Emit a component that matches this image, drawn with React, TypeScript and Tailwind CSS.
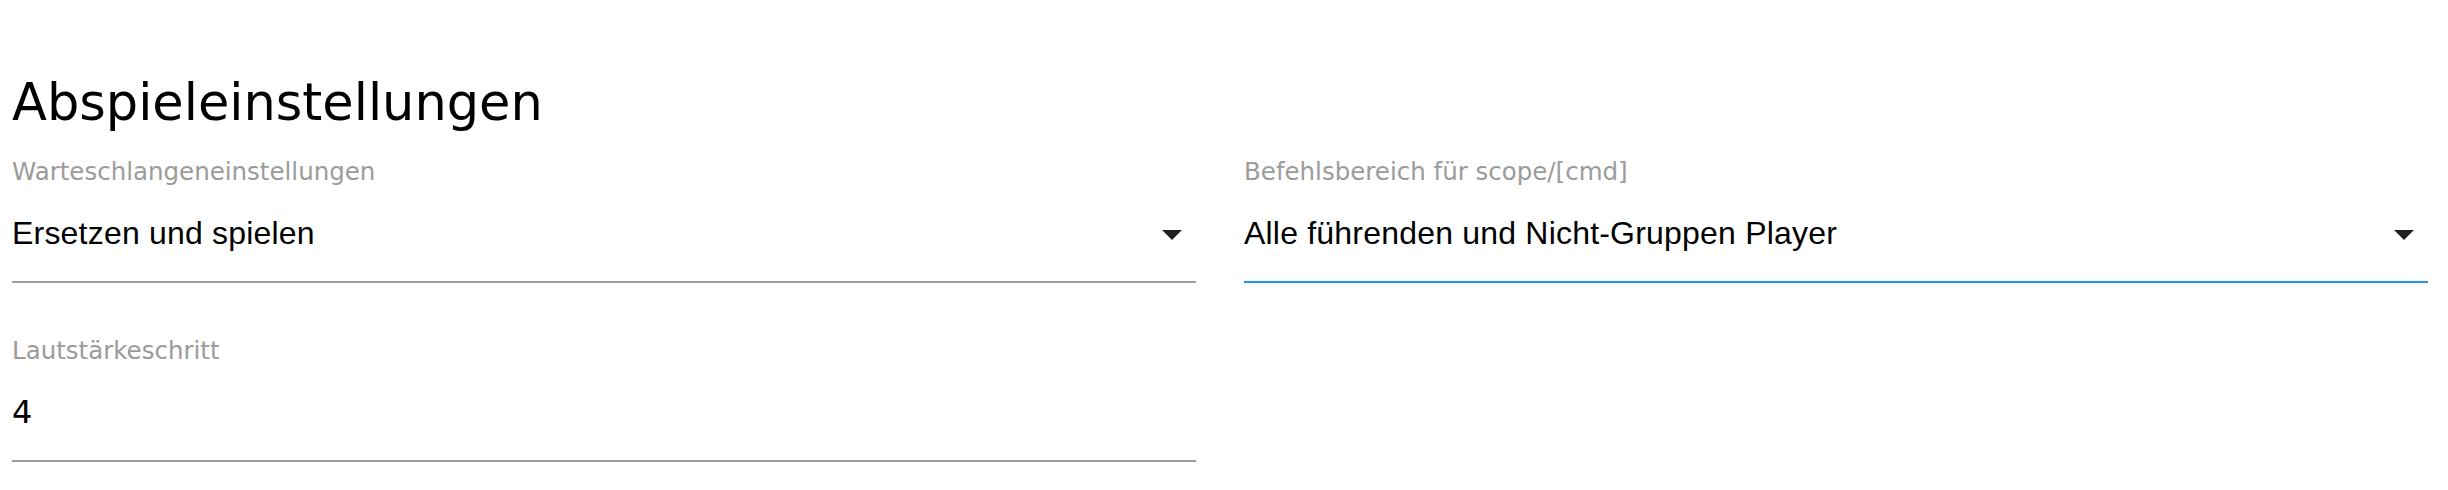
import { Fragment } from 'react'

function Caret() {
  return (
    <svg
      width="20"
      height="10"
      viewBox="0 0 20 10"
      className="mt-[4px] mr-[14px] shrink-0"
      aria-hidden="true"
    >
      <path d="M0 0h20L10 10z" fill="#212121" />
    </svg>
  )
}

function Field({
  label,
  value,
  dropdown,
  focused,
  sans
}: {
  label: string
  value: string
  dropdown?: boolean
  focused?: boolean
  sans?: boolean
}) {
  return (
    <div className="flex flex-col">
      <label className="text-[24.5px] leading-[30px] text-[#9b9b9b] font-['DejaVu_Sans',sans-serif]">
        {label}
      </label>
      <div
        className={
          focused
            ? 'mt-[26px] flex items-center border-b-2 border-[#2196f3] pb-[28px]'
            : 'mt-[26px] flex items-center border-b-2 border-[#9e9e9e] pb-[28px]'
        }
      >
        <span
          className={
            sans
              ? "flex-1 text-[32px] leading-[40px] tracking-[0.2px] text-black font-['Liberation_Sans',Arial,sans-serif]"
              : "flex-1 text-[32px] leading-[40px] text-black font-['DejaVu_Sans',sans-serif]"
          }
        >
          {value}
        </span>
        {dropdown && <Caret />}
      </div>
    </div>
  )
}

export default function App() {
  return (
    <Fragment>
      <main className="min-h-[490px] bg-white pt-[73px] pl-[12px] pr-[20px]">
        <h1 className="text-[51px] leading-[60px] font-normal text-black font-['DejaVu_Sans',sans-serif]">
          Abspieleinstellungen
        </h1>
        <section className="mt-[24px] grid grid-cols-2 gap-x-[48px] gap-y-[53px]">
          <Field
            label="Warteschlangeneinstellungen"
            value="Ersetzen und spielen"
            dropdown
            sans
          />
          <Field
            label="Befehlsbereich für scope/[cmd]"
            value="Alle führenden und Nicht-Gruppen Player"
            dropdown
            focused
            sans
          />
          <Field label="Lautstärkeschritt" value="4" />
        </section>
      </main>
    </Fragment>
  )
}
